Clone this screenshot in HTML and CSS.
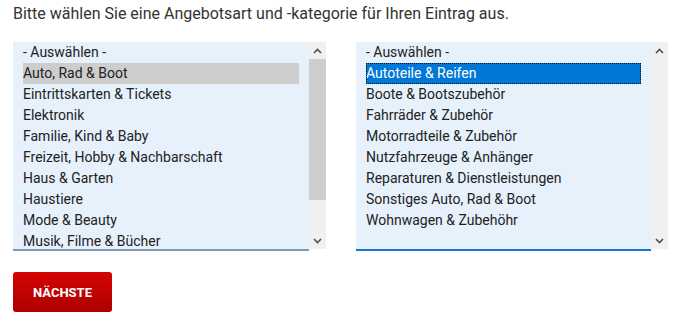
FILE: index.html
```html
<!DOCTYPE html>
<html lang="de">
<head>
<meta charset="utf-8">
<title>Angebotsart</title>
<link rel="stylesheet" href="styles.css">
</head>
<body>
<p class="intro">Bitte wählen Sie eine Angebotsart und -kategorie für Ihren Eintrag aus.</p>
<div class="selects">
  <div class="box box-left">
    <ul class="list">
      <li>- Auswählen -</li>
      <li class="sel-gray">Auto, Rad &amp; Boot</li>
      <li>Eintrittskarten &amp; Tickets</li>
      <li>Elektronik</li>
      <li>Familie, Kind &amp; Baby</li>
      <li>Freizeit, Hobby &amp; Nachbarschaft</li>
      <li>Haus &amp; Garten</li>
      <li>Haustiere</li>
      <li>Mode &amp; Beauty</li>
      <li>Musik, Filme &amp; Bücher</li>
    </ul>
    <div class="scrollbar">
      <div class="arrow"><svg width="9" height="6" viewBox="0 0 9 6"><path d="M1 5 L4.5 1.5 L8 5" fill="none" stroke="#505050" stroke-width="1.6"/></svg></div>
      <div class="thumb"></div>
      <div class="track"></div>
      <div class="arrow"><svg width="9" height="6" viewBox="0 0 9 6"><path d="M1 1 L4.5 4.5 L8 1" fill="none" stroke="#505050" stroke-width="1.6"/></svg></div>
    </div>
  </div>
  <div class="box box-right">
    <ul class="list">
      <li>- Auswählen -</li>
      <li class="sel-blue">Autoteile &amp; Reifen</li>
      <li>Boote &amp; Bootszubehör</li>
      <li>Fahrräder &amp; Zubehör</li>
      <li>Motorradteile &amp; Zubehör</li>
      <li>Nutzfahrzeuge &amp; Anhänger</li>
      <li>Reparaturen &amp; Dienstleistungen</li>
      <li>Sonstiges Auto, Rad &amp; Boot</li>
      <li>Wohnwagen &amp; Zubehöhr</li>
    </ul>
    <div class="scrollbar">
      <div class="arrow"><svg width="9" height="6" viewBox="0 0 9 6"><path d="M1 5 L4.5 1.5 L8 5" fill="none" stroke="#505050" stroke-width="1.6"/></svg></div>
      <div class="track"></div>
      <div class="arrow"><svg width="9" height="6" viewBox="0 0 9 6"><path d="M1 1 L4.5 4.5 L8 1" fill="none" stroke="#505050" stroke-width="1.6"/></svg></div>
    </div>
  </div>
</div>
<button class="next">NÄCHSTE</button>
</body>
</html>
```
FILE: styles.css
```css
html, body {
  margin: 0;
  padding: 0;
  background: #fff;
}
body {
  padding: 0 13px;
  font-family: Roboto, "Liberation Sans", Arial, sans-serif;
  color: #222;
}
.intro {
  margin: 0;
  padding-top: 3px;
  height: 42px;
  box-sizing: border-box;
  font-size: 16px;
  line-height: 22px;
  color: #333;
}
.selects {
  display: flex;
  gap: 30px;
  height: 210px;
}
.box {
  display: flex;
  align-items: flex-start;
  width: 313px;
  height: 209px;
  overflow: hidden;
}
.box-right {
  width: 312px;
}
.list {
  flex: 1;
  box-sizing: border-box;
  margin: 0;
  padding: 0 10px;
  list-style: none;
  background: #e6f1fc;
  border-bottom: 2px solid #7e9ab6;
  height: 209px;
  overflow: hidden;
  font-size: 14px;
  line-height: 21px;
  color: #222;
}
.box-right .list {
  border-bottom-color: #1a73d6;
}
.list li {
  height: 21px;
  white-space: nowrap;
}
.sel-gray {
  background: #cdcdcd;
}
.sel-blue {
  background: #0078d7;
  color: #fff;
  outline: 1px dotted #111;
  outline-offset: -1px;
}
.scrollbar {
  width: 17px;
  height: 207px;
  background: #f0f0f0;
  display: flex;
  flex-direction: column;
}
.arrow {
  height: 17px;
  display: flex;
  align-items: center;
  justify-content: center;
}
.thumb {
  height: 141px;
  background: #cdcdcd;
}
.track {
  flex: 1;
}
.next {
  margin-top: 20px;
  width: 99px;
  height: 40px;
  border: none;
  border-radius: 3px;
  background: linear-gradient(#d40404, #ad0000);
  color: #fff;
  font-family: Roboto, "Liberation Sans", Arial, sans-serif;
  font-weight: bold;
  font-size: 13px;
  padding: 0;
}
```
